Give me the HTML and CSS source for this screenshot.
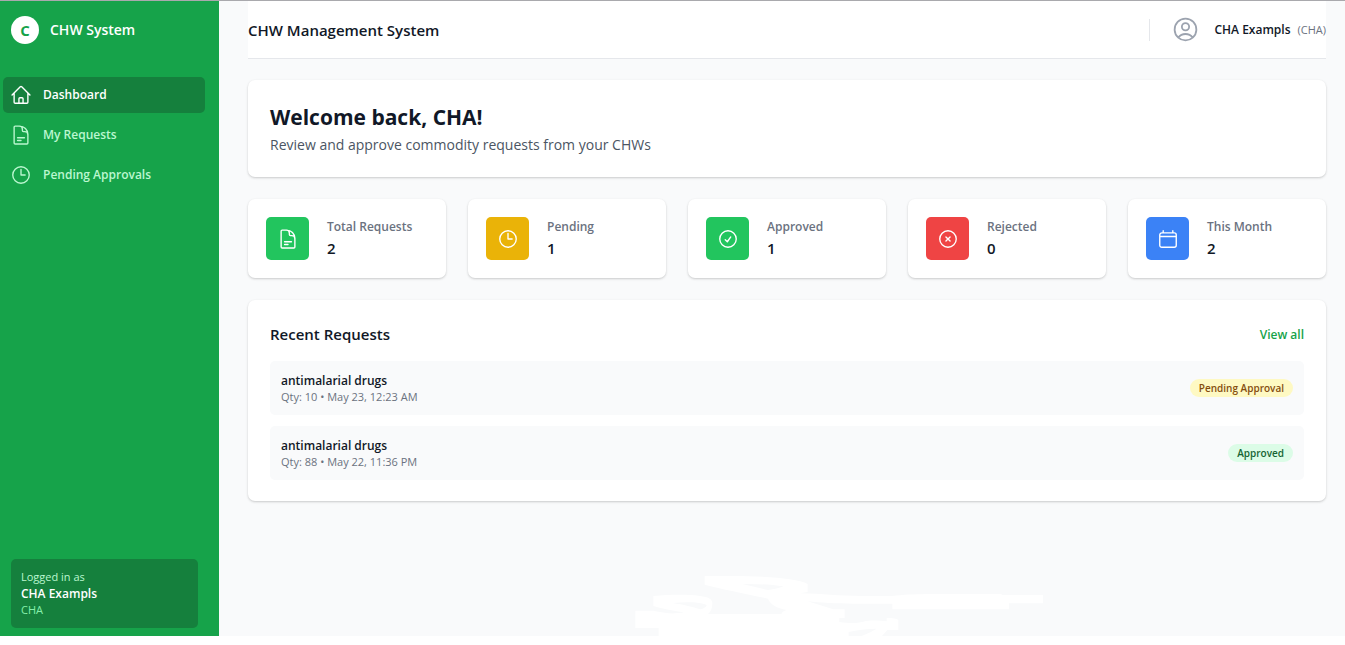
FILE: index.html
```html
<!DOCTYPE html>
<html lang="en">
<head>
<meta charset="utf-8">
<title>CHW Management System</title>
<link rel="stylesheet" href="styles.css">
</head>
<body>
<svg class="sprite" aria-hidden="true">
  <symbol id="i-home" viewBox="0 0 24 24"><path d="m2.25 12 8.954-8.955c.44-.439 1.152-.439 1.591 0L21.75 12M4.5 9.75v10.125c0 .621.504 1.125 1.125 1.125H9.75v-4.875c0-.621.504-1.125 1.125-1.125h2.25c.621 0 1.125.504 1.125 1.125V21h4.125c.621 0 1.125-.504 1.125-1.125V9.75M8.25 21h8.25"/></symbol>
  <symbol id="i-doc" viewBox="0 0 24 24"><path d="M19.5 14.25v-2.625a3.375 3.375 0 0 0-3.375-3.375h-1.5A1.125 1.125 0 0 1 13.5 7.125v-1.5a3.375 3.375 0 0 0-3.375-3.375H8.25m0 12.75h7.5m-7.5 3H12M10.5 2.25H5.625c-.621 0-1.125.504-1.125 1.125v17.25c0 .621.504 1.125 1.125 1.125h12.75c.621 0 1.125-.504 1.125-1.125V11.25a9 9 0 0 0-9-9Z"/></symbol>
  <symbol id="i-clock" viewBox="0 0 24 24"><path d="M12 6v6h4.5m4.5 0a9 9 0 1 1-18 0 9 9 0 0 1 18 0Z"/></symbol>
  <symbol id="i-check" viewBox="0 0 24 24"><path d="M9 12.75 11.25 15 15 9.75M21 12a9 9 0 1 1-18 0 9 9 0 0 1 18 0Z"/></symbol>
  <symbol id="i-x" viewBox="0 0 24 24"><path d="m9.75 9.75 4.5 4.5m0-4.5-4.5 4.5M21 12a9 9 0 1 1-18 0 9 9 0 0 1 18 0Z"/></symbol>
  <symbol id="i-cal" viewBox="0 0 24 24"><path d="M6.75 3v2.25M17.25 3v2.25M3 18.75V7.5a2.25 2.25 0 0 1 2.25-2.25h13.5A2.25 2.25 0 0 1 21 7.5v11.25m-18 0A2.25 2.25 0 0 0 5.25 21h13.5A2.25 2.25 0 0 0 21 18.75m-18 0v-9.5h18v9.5"/></symbol>
  <symbol id="i-user" viewBox="0 0 24 24"><path d="M17.982 18.725A7.488 7.488 0 0 0 12 15.75a7.488 7.488 0 0 0-5.982 2.975m11.963 0a9 9 0 1 0-11.963 0m11.963 0A8.966 8.966 0 0 1 12 21a8.966 8.966 0 0 1-5.982-2.275M15 9.75a3 3 0 1 1-6 0 3 3 0 0 1 6 0Z"/></symbol>
</svg>
<div class="app">
  <aside class="sidebar">
    <div class="brand"><span class="brand-mark">C</span><span class="brand-name">CHW System</span></div>
    <nav class="nav">
      <a class="nav-item active" href="#"><svg class="icon"><use href="#i-home"/></svg>Dashboard</a>
      <a class="nav-item" href="#"><svg class="icon"><use href="#i-doc"/></svg>My Requests</a>
      <a class="nav-item" href="#"><svg class="icon"><use href="#i-clock"/></svg>Pending Approvals</a>
    </nav>
    <div class="session">
      <p class="session-label">Logged in as</p>
      <p class="session-name">CHA Exampls</p>
      <p class="session-role">CHA</p>
    </div>
  </aside>
  <div class="page">
    <header class="topbar">
      <h1 class="topbar-title">CHW Management System</h1>
      <div class="account">
        <svg class="avatar"><use href="#i-user"/></svg>
        <span class="account-name">CHA Exampls</span>
        <span class="account-role">(CHA)</span>
      </div>
    </header>
    <main class="content">
      <section class="card welcome">
        <h2 class="welcome-title">Welcome back, CHA!</h2>
        <p class="welcome-text">Review and approve commodity requests from your CHWs</p>
      </section>
      <section class="stats">
        <div class="card stat"><span class="stat-icon green"><svg class="icon"><use href="#i-doc"/></svg></span><div><p class="stat-label">Total Requests</p><p class="stat-value">2</p></div></div>
        <div class="card stat"><span class="stat-icon yellow"><svg class="icon"><use href="#i-clock"/></svg></span><div><p class="stat-label">Pending</p><p class="stat-value">1</p></div></div>
        <div class="card stat"><span class="stat-icon green"><svg class="icon"><use href="#i-check"/></svg></span><div><p class="stat-label">Approved</p><p class="stat-value">1</p></div></div>
        <div class="card stat"><span class="stat-icon red"><svg class="icon"><use href="#i-x"/></svg></span><div><p class="stat-label">Rejected</p><p class="stat-value">0</p></div></div>
        <div class="card stat"><span class="stat-icon blue"><svg class="icon"><use href="#i-cal"/></svg></span><div><p class="stat-label">This Month</p><p class="stat-value">2</p></div></div>
      </section>
      <section class="card recent">
        <div class="recent-head"><h3 class="recent-title">Recent Requests</h3><a class="view-all" href="#">View all</a></div>
        <ul class="requests">
          <li class="request"><div><p class="request-name">antimalarial drugs</p><p class="request-meta">Qty: 10 • May 23, 12:23 AM</p></div><span class="badge pending">Pending Approval</span></li>
          <li class="request"><div><p class="request-name">antimalarial drugs</p><p class="request-meta">Qty: 88 • May 22, 11:36 PM</p></div><span class="badge approved">Approved</span></li>
        </ul>
      </section>
    </main>
    <svg class="scribble" viewBox="0 0 1320 228" aria-hidden="true">
      <path fill-rule="evenodd" d="M254 48H330C430 48 530 54 563 72V96L540 100C610 101 650 108 730 108H816C850 104 880 103 920 102H1145V105H1269V130H1167V148H817V131H700C650 131 600 128 563 124L640 148H674V174H658V186C690 190 710 190 730 185C750 180 780 182 800 184V174C820 174 830 176 835 180V210H802L786 228H725C745 220 760 212 770 206C740 206 710 210 686 216V228H116V204H46V152H100C120 156 145 161 165 160C185 159 190 157 192 157C160 152 120 145 100 138V108C150 104 200 103 240 108C265 111 277 117 277 130C277 145 273 155 264 162H484C486 155 495 152 500 150C470 145 450 132 444 116C380 102 300 86 254 74ZM368 72C400 80 425 86 445 90C470 86 485 82 490 79C455 74 410 71 368 72ZM158 129C190 134 220 141 240 148C255 145 260 139 260 135C240 126 200 125 158 129Z"/>
    </svg>
  </div>
</div>
</body>
</html>
```
FILE: styles.css
```css
* { box-sizing: border-box; margin: 0; padding: 0; }
body { background: #fff; color: #111827; font-family: "Segoe UI", "Open Sans", "Noto Sans", sans-serif; font-size: 12px; line-height: 18px; }
a { text-decoration: none; color: inherit; }
ul { list-style: none; }
svg { fill: none; stroke: currentColor; stroke-width: 1.5; stroke-linecap: round; stroke-linejoin: round; flex: none; }
.sprite { display: none; }
.app { display: flex; min-height: calc(100vh - 9px); border-top: 1px solid #a9a9ad; background: #f9fafb; }

.sidebar { display: flex; flex-direction: column; width: 219px; flex: none; background: #16a34a; color: #fff; }
.brand { display: flex; align-items: center; gap: 11px; height: 58px; padding: 0 11px; }
.brand-mark { display: grid; place-items: center; width: 28px; height: 28px; border-radius: 50%; background: #fff; color: #16a34a; font-size: 15px; font-weight: 700; }
.brand-name { font-size: 14px; font-weight: 600; }
.nav { display: flex; flex-direction: column; gap: 4px; padding: 18px 14px 0 3px; }
.nav-item { display: flex; align-items: center; gap: 11px; height: 36px; padding: 0 7px; border-radius: 5px; color: #bbf7d0; font-weight: 600; }
.nav-item.active { background: #15803d; color: #fff; }
.icon { width: 22px; height: 22px; }
.session { margin: auto 21px 8px 11px; padding: 10px; border-radius: 5px; background: #15803d; }
.session-label { color: #bbf7d0; font-size: 11px; line-height: 16px; }
.session-name { font-weight: 600; line-height: 17px; }
.session-role { color: #86efac; font-size: 11px; line-height: 16px; }

.page { position: relative; flex: 1; min-width: 0; padding: 0 19px 0 29px; }
.topbar { display: flex; align-items: center; justify-content: space-between; height: 58px; border-bottom: 1px solid #e5e7eb; background: #fff; }
.topbar-title { font-size: 15px; font-weight: 600; line-height: 24px; }
.account { display: flex; align-items: center; height: 22px; padding-left: 21px; border-left: 1px solid #e5e7eb; }
.avatar { width: 29px; height: 29px; color: #9ca3af; }
.account-name { margin-left: 14px; font-weight: 600; }
.account-role { margin-left: 7px; color: #6b7280; font-size: 11px; }

.content { display: flex; flex-direction: column; gap: 22px; padding-top: 21px; }
.card { border-radius: 7px; background: #fff; box-shadow: 0 1px 3px rgba(0, 0, 0, .1), 0 1px 2px rgba(0, 0, 0, .1); }
.welcome { padding: 22px; }
.welcome-title { font-size: 21px; font-weight: 700; line-height: 30px; }
.welcome-text { margin-top: 3px; color: #4b5563; font-size: 14px; line-height: 20px; }
.stats { display: grid; grid-template-columns: repeat(5, 1fr); gap: 22px; }
.stat { display: flex; align-items: center; gap: 18px; padding: 18px; }
.stat-icon { display: grid; place-items: center; width: 43px; height: 43px; border-radius: 5px; color: #fff; flex: none; }
.green { background: #22c55e; }
.yellow { background: #eab308; }
.red { background: #ef4444; }
.blue { background: #3b82f6; }
.stat-label { color: #6b7280; font-weight: 600; line-height: 19px; }
.stat-value { font-size: 15px; font-weight: 600; line-height: 24px; }
.recent { padding: 22px 22px 21px; }
.recent-head { display: flex; align-items: center; justify-content: space-between; line-height: 25px; }
.recent-title { font-size: 15px; font-weight: 600; }
.view-all { color: #16a34a; font-weight: 600; }
.requests { display: flex; flex-direction: column; gap: 11px; margin-top: 14px; }
.request { display: flex; align-items: center; justify-content: space-between; padding: 11px; border-radius: 5px; background: #f9fafb; }
.request-name { font-weight: 600; line-height: 18px; }
.request-meta { color: #6b7280; font-size: 11px; line-height: 14px; }
.badge { padding: 0 9px; border-radius: 9px; font-size: 10px; font-weight: 600; }
.pending { background: #fef9c3; color: #854d0e; }
.approved { background: #dcfce7; color: #166534; }
.scribble { position: absolute; bottom: 0; left: 401px; width: 440px; height: 76px; fill: #fff; stroke: none; }
```
